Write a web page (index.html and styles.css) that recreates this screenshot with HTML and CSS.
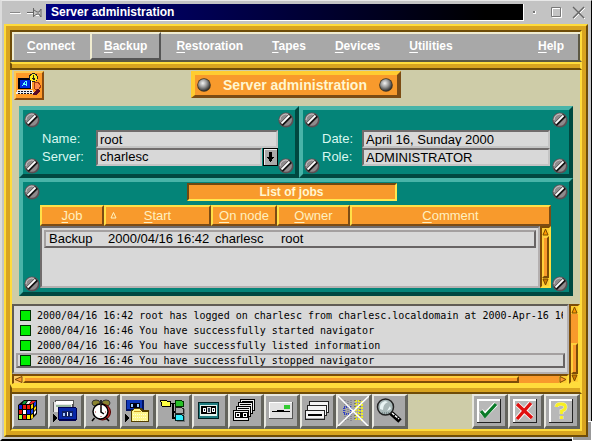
FILE: index.html
```html
<!DOCTYPE html>
<html lang="en">
<head>
<meta charset="utf-8">
<title>Server administration</title>
<link rel="stylesheet" href="styles.css">
</head>
<body>
<svg class="defs" width="0" height="0" aria-hidden="true">
  <defs>
    <radialGradient id="ball" cx="40%" cy="35%" r="65%">
      <stop offset="0" stop-color="#f4f4f4"/><stop offset=".5" stop-color="#9a9a9a"/><stop offset="1" stop-color="#333"/>
    </radialGradient>
    <pattern id="dots" width="2" height="2" patternUnits="userSpaceOnUse">
      <path fill="#ffff70" d="M0 0h2v2H0z"/><path fill="#fff" d="M0 0h1v1H0zM1 1h1v1H1z"/>
    </pattern>
    <symbol id="screw" viewBox="0 0 16 16">
      <circle cx="8" cy="8" r="7.6" fill="#5a5054"/>
      <circle cx="7.7" cy="7.5" r="6.3" fill="#8f8a8c"/>
      <path d="M2 8a6 6 0 0 1 8-5.600" stroke="#c8c4c6" fill="none"/>
      <path d="M3.500 12.500L12.500 3.500" stroke="#111" stroke-width="4"/>
      <path d="M3.500 11.500L11.500 3.500" stroke="#fff" stroke-width="1.800"/>
    </symbol>
    <symbol id="knob" viewBox="0 0 14 14"><circle cx="7" cy="7" r="6.800" fill="#43351f"/><circle cx="7" cy="7" r="6" fill="url(#ball)"/></symbol>
  </defs>
</svg>

<div class="window">
  <header class="titlebar">
    <button class="wm" aria-label="Minimize"><svg width="13" height="13"><path d="M1 7.500h11" stroke="#fff"/><path d="M1 6.500h10" stroke="#888"/></svg></button>
    <button class="wm" aria-label="Stick"><svg width="16" height="13"><path d="M1 7.500h6M9 9.500h4" stroke="#fff"/><path d="M1 6.500h6M7.500 2v9M8 4l3 2h2l2-3v8l-2-3h-2l-3 2" stroke="#666" fill="none"/></svg></button>
    <h1 class="caption">Server administration</h1>
    <div class="wm-group">
      <button class="wm" aria-label="Lower"><svg width="13" height="13"><path d="M5 5h3v3H5z" fill="#fff"/><path d="M5 5h2v2H5z" fill="#777"/></svg></button>
      <button class="wm" aria-label="Maximize"><svg width="13" height="13"><path d="M2.500 2.500h9v9h-9z" stroke="#fff" fill="none"/><path d="M1.500 1.500h9v9h-9z" stroke="#777" fill="none"/></svg></button>
      <button class="wm" aria-label="Close"><svg width="13" height="13"><path d="M2 2l11 11M13 2L2 13" stroke="#fff"/><path d="M1 1l11 11M12 1L1 12" stroke="#666" stroke-width="1.300"/></svg></button>
    </div>
  </header>

  <div class="frame">
    <nav class="menubar">
      <button class="menu"><u>C</u>onnect</button>
      <button class="menu active"><u>B</u>ackup</button>
      <button class="menu"><u>R</u>estoration</button>
      <button class="menu"><u>T</u>apes</button>
      <button class="menu"><u>D</u>evices</button>
      <button class="menu"><u>U</u>tilities</button>
      <button class="menu help"><u>H</u>elp</button>
    </nav>
    <div class="bar"></div>

    <main class="content">
      <div class="heading">
        <button class="session" aria-label="Session">
          <svg width="26" height="25" shape-rendering="crispEdges">
            <path d="M3 5h13v11H3z" fill="#fff"/><path d="M2 5h13v11H2z" fill="#001"/><path d="M4 7h10v8H4z" fill="#0028e0"/>
            <path d="M6 13l4-5 1 5M8 11h3" stroke="#6ff" fill="none"/>
            <path d="M1 17h16l1 4H0z" fill="#eee"/><path d="M2 18h14M2 20h15" stroke="#112" stroke-dasharray="2 1"/>
            <path d="M18 10l4-1 3 4-2 3h-4z" fill="#ff8a4c" stroke="#a33b12"/>
            <path d="M17 20l5-4 2 2-4 4h-3z" fill="#5a0a28"/>
            <circle cx="17.500" cy="4.500" r="4" fill="#ffee20" stroke="#222"/><path d="M17.500 2v4M16 5l2 2 1-2" stroke="#222" fill="none"/>
          </svg>
        </button>
        <h2 class="banner"><svg width="14" height="14"><use href="#knob"/></svg><span>Server administration</span><svg width="14" height="14"><use href="#knob"/></svg></h2>
      </div>

      <div class="panels">
        <section class="panel form form-user">
          <label for="name">Name:</label><input id="name" value="root">
          <label for="server">Server:</label>
          <div class="combo">
            <select id="server"><option>charlesc</option></select>
            <svg class="arrow" width="15" height="18" shape-rendering="crispEdges"><path d="M0 0h15v18H0z" fill="#000"/><path d="M1 1h13v16H1z" fill="#eee"/><path d="M2 2h12v15H2z" fill="#aaa"/><path d="M6 4h3v5h2v1h-1v1H9v2H8v1H7v-1H6v-2H5v-1H4V9h2z" fill="#000"/></svg>
          </div>
          <svg class="screw tl"><use href="#screw"/></svg><svg class="screw tr"><use href="#screw"/></svg><svg class="screw bl"><use href="#screw"/></svg><svg class="screw br"><use href="#screw"/></svg>
        </section>
        <section class="panel form form-role">
          <label for="date">Date:</label><input id="date" value="April 16, Sunday 2000">
          <label for="role">Role:</label><input id="role" value="ADMINISTRATOR">
          <svg class="screw tl"><use href="#screw"/></svg><svg class="screw tr"><use href="#screw"/></svg><svg class="screw bl"><use href="#screw"/></svg><svg class="screw br"><use href="#screw"/></svg>
        </section>
        <section class="panel jobs">
          <h3 class="list-title">List of jobs</h3>
          <div class="job-grid">
            <table>
              <thead><tr>
                <th><u>J</u>ob</th>
                <th><svg class="sort" width="7" height="7"><path d="M3.500 .5l2.500 5.500h-5z" fill="none" stroke="#fff3c0"/></svg><u>S</u>tart</th>
                <th><u>O</u>n node</th><th><u>O</u>wner</th><th><u>C</u>omment</th>
              </tr></thead>
              <tbody><tr><td>Backup</td><td>2000/04/16 16:42</td><td>charlesc</td><td>root</td><td></td></tr></tbody>
            </table>
            <div class="vscroll">
              <svg width="7" height="8"><path d="M0 0h7v8H0z" fill="#fc3"/><path d="M3.500 1L6 7H1z" fill="#f90" stroke="#7a4a00"/></svg>
              <div class="thumb"></div>
              <svg width="7" height="8"><path d="M0 0h7v8H0z" fill="#fc3"/><path d="M1 1h5L3.500 7z" fill="#c70" stroke="#7a4a00"/></svg>
            </div>
          </div>
          <svg class="screw tl"><use href="#screw"/></svg><svg class="screw tr"><use href="#screw"/></svg><svg class="screw bl"><use href="#screw"/></svg><svg class="screw br"><use href="#screw"/></svg>
        </section>
      </div>
    </main>

    <section class="log-area">
      <ul class="log">
        <li><i></i><span>2000/04/16 16:42 root has logged on charlesc from charlesc.localdomain at 2000-Apr-16 16:42</span></li>
        <li><i></i><span>2000/04/16 16:46 You have successfully started navigator</span></li>
        <li><i></i><span>2000/04/16 16:46 You have successfully listed information</span></li>
        <li class="selected"><i></i><span>2000/04/16 16:46 You have successfully stopped navigator</span></li>
      </ul>
      <div class="vscroll log-v">
        <svg width="7" height="8"><path d="M0 0h7v8H0z" fill="#fc3"/><path d="M3.500 1L6 7H1z" fill="#f90" stroke="#7a4a00"/></svg>
        <div class="thumb"></div>
        <svg width="7" height="8"><path d="M0 0h7v8H0z" fill="#fc3"/><path d="M1 1h5L3.500 7z" fill="#c70" stroke="#7a4a00"/></svg>
      </div>
      <div class="hscroll">
        <svg width="9" height="7"><path d="M0 0h9v7H0z" fill="#fc6"/><path d="M1 3.500L8 .5v6z" fill="#f93" stroke="#7a4a00"/></svg>
        <div class="thumb"></div>
        <svg width="8" height="7"><path d="M0 0h8v7H0z" fill="#fc3"/><path d="M7 3.500L1 .5v6z" fill="#f93" stroke="#7a4a00"/></svg>
      </div>
    </section>
    <div class="bar bar-low"></div>

    <footer class="toolbar">
      <button class="tool" aria-label="Overview"><svg viewBox="2 2 31 30">
        <path d="M6 11l6-5h13v14l-6 6H6z" fill="#000"/>
        <path d="M7 11h3v4H7zM15 16h3v4h-3z" fill="#0a18d8"/><path d="M11 11h3v4h-3zM15 11h3v4h-3zM11 21h3v4h-3z" fill="#e81808"/>
        <path d="M11 16h3v4h-3z" fill="#fff"/><path d="M7 21h3v4H7z" fill="#9f3"/><path d="M15 21h3v4h-3z" fill="#fe0"/><path d="M7 16h3v4H7z" fill="#e81808"/>
        <path d="M12 7h3l-2 3h-3z" fill="#0a9a38"/><path d="M16 7h3l-2 3h-3z" fill="#eee"/><path d="M20 7h4l-4 3h-3z" fill="#e22"/>
        <path d="M19 11l2-1v4l-2 1zM22 14l2-2v3l-2 2zM19 21l2-1v4l-2 1z" fill="#ffd900"/><path d="M22 9l2-2v4l-2 2zM19 16l2-1v4l-2 1z" fill="#1840e8"/><path d="M22 18l2-2v3l-2 2z" fill="#fff"/>
      </svg></button>
      <button class="tool" aria-label="Tape backup"><svg viewBox="2 2 31 30" shape-rendering="crispEdges">
        <path d="M7 6h19v12H5V8h2z" fill="#555"/><path d="M6 8h18v10H6z" fill="#e8e8e8"/><path d="M8 7h17v3H8z" fill="#fff"/><path d="M8 11h15v2H8z" fill="#99b8a0"/>
        <path d="M10 13h18v1h1v12h-1v1H11v-1h-1z" fill="#000050"/><path d="M11 14h17v11H11z" fill="#0828a8"/><path d="M14 17h11v6H14z" fill="#102060"/>
        <path d="M15 19h2v3h-2zM22 19h2v3h-2z" fill="#a8c8ff"/><path d="M19 18h1v4h-1z" fill="#fff"/>
        <path d="M5 20h1v1h1v1h1v1h1v2H8v1H7v1H6v1H5z" fill="#000"/>
      </svg></button>
      <button class="tool" aria-label="Schedule"><svg viewBox="2 2 31 30">
        <ellipse cx="12" cy="9" rx="4" ry="3" fill="#8a8430" stroke="#333"/><ellipse cx="22" cy="9" rx="4" ry="3" fill="#8a8430" stroke="#333"/>
        <circle cx="18.500" cy="18" r="8" fill="#c02828" stroke="#500"/><circle cx="16.500" cy="17.500" r="7.500" fill="#fff" stroke="#000" stroke-width="1.500"/>
        <path d="M17 11v7l3 2M10.500 24L8 27M22 24l3 3M17 6v3" stroke="#000" stroke-width="1.500" fill="none"/><path d="M17 12v1M17 22v1M11 18h1M21 18h1" stroke="#a33"/>
      </svg></button>
      <button class="tool" aria-label="File backup"><svg viewBox="2 2 31 30" shape-rendering="crispEdges">
        <path d="M6 6h18v11H6z" fill="#001060"/><path d="M7 6h15v9H7z" fill="#1038b8"/><path d="M10 9h10v5H10z" fill="#001"/><path d="M11 10h2v3h-2zM17 10h2v3h-2z" fill="#9cf"/>
        <path d="M12 16l2-2h7l2 2h6v12H11V16z" fill="#554000"/><path d="M12 17l2-2h6l2 3h6v9H12V17z" fill="#fff68a"/><path d="M14 17h7v1h-7z" fill="#cc9b20"/><path d="M13 20h14M13 23h14M13 26h14" stroke="#fffdd8" stroke-dasharray="1 1"/>
        <path d="M5 20h1v1h1v1h1v1h1v2H8v1H7v1H6v1H5z" fill="#000"/>
      </svg></button>
      <button class="tool" aria-label="Tree"><svg viewBox="2 2 31 30" shape-rendering="crispEdges">
        <path d="M13 9h6v1h-6zM16 9h2v16h-2zM16 17h4v2h-4zM16 23h4v2h-4z" fill="#000"/>
        <path d="M4 6h6l1 1h4v6H6V12H5V8H4z" fill="#000"/><path d="M5 7h5l1 1h3v4H6V8H5z" fill="#ff4"/>
        <path d="M19 6h6l1 1h2v6h-9z" fill="#030"/><path d="M20 7h5l1 1h1v4h-7z" fill="#28c028"/>
        <path d="M19 13h6l1 1h2v6h-9z" fill="#222"/><path d="M20 14h5l1 1h1v4h-7z" fill="#aaa"/><path d="M28 15h1v6h-8v-1h7zM28 22h1v6h-8v-1h7z" fill="#777"/>
        <path d="M19 20h6l1 1h2v6h-9z" fill="#022"/><path d="M20 21h5l1 1h1v4h-7z" fill="#3ef"/>
      </svg></button>
      <button class="tool" aria-label="Cassette"><svg viewBox="2 2 31 30" shape-rendering="crispEdges">
        <path d="M6 8h21v17H6z" fill="#022"/><path d="M7 9h19v15H7z" fill="#207c80"/><path d="M8 11h17v11H8z" fill="#e4f4ee"/><path d="M9 12h15v8H9z" fill="#000"/>
        <path d="M11 14h3v4h-3zM20 14h3v4h-3z" fill="#fff"/><path d="M12 15h1v2h-1zM21 15h1v2h-1z" fill="#123"/><path d="M15 13h4v6h-4z" fill="#ddd"/><path d="M16 14h2v4h-2z" fill="#345"/>
      </svg></button>
      <button class="tool" aria-label="Cassette stack"><svg viewBox="2 2 31 30" shape-rendering="crispEdges">
        <g stroke="#000" fill="#eee"><path d="M12.500 5.500h14v11h-14z"/><path d="M10.500 8.500h14v11h-14z"/><path d="M8.500 12.500h14v10h-14z"/><path d="M5.500 16.500h15v10h-15z"/></g>
        <path d="M14 7h11M12 10h11M10 14h11" stroke="#000"/><path d="M7 18h13v6H7z" fill="#000"/><path d="M8 19h4v4H8zM15 19h4v4h-4z" fill="#fff"/><path d="M9 20h2v2H9zM16 20h2v2h-2z" fill="#000"/>
      </svg></button>
      <button class="tool" aria-label="Drive"><svg viewBox="2 2 31 30" shape-rendering="crispEdges">
        <path d="M5 8h24v17H5z" fill="#555"/><path d="M5 8h23v16H5z" fill="#fff"/><path d="M6 9h22v15H6z" fill="#e2e2e2"/><path d="M20 11h6v4h-6z" fill="#3c3"/><path d="M8 17h18v1H8zM13 16h7v2h-7z" fill="#000"/>
      </svg></button>
      <button class="tool" aria-label="Drive stack"><svg viewBox="2 2 31 30" shape-rendering="crispEdges">
        <g stroke="#222" fill="#f4f4f4"><path d="M9.500 7.500h19v11h-19z"/><path d="M7.500 11.500h19v10h-19z"/><path d="M5.500 16.500h19v9h-19z"/></g>
        <path d="M8 20h14v2H8z" fill="#000"/><path d="M6 24h18v1H6z" fill="#aaa"/>
      </svg></button>
      <button class="tool" aria-label="Disabled view"><svg viewBox="2 2 31 30">
        <path d="M9 6v21M12 7v20M15 6v21" stroke="#667" stroke-dasharray="1 1"/><path d="M8 13h7v7H8z" fill="none" stroke="#3040c8" stroke-dasharray="1 1" stroke-width="2"/>
        <path d="M20 6v21M23 6v21M26 7v20" stroke="#ee2" stroke-width="2" stroke-dasharray="2 1"/><path d="M19 6v21M24 6v21" stroke="#443" stroke-dasharray="1 2"/>
        <path d="M2 2l31 31M33 2L2 32" stroke="#fff" stroke-width="1.500"/>
      </svg></button>
      <button class="tool" aria-label="Search"><svg viewBox="2 2 31 30">
        <path d="M18 18l10 9" stroke="#000" stroke-width="5"/><path d="M20 19l7 6" stroke="#fff" stroke-width="1.500" stroke-dasharray="3 1"/>
        <circle cx="13.500" cy="13" r="8" fill="#a9b8b8" stroke="#222" stroke-width="1.500"/><path d="M8 15q-1-6 5-8l3 1q-5 2-5 8zM15 17l3-5 1 3z" fill="#e8f4f4"/><path d="M10 19h7" stroke="#566" stroke-dasharray="1 1"/>
      </svg></button>
      <span class="spacer"></span>
      <button class="tool" aria-label="OK"><svg viewBox="2 2 31 30">
        <path d="M5 5h24v24H5z" fill="#222"/><path d="M5 5h23v23H5z" fill="#fff"/><path d="M7 7h21v21H7z" fill="#b8b8b8"/>
        <path d="M9 17l4 4L24 10" stroke="#fff" stroke-width="5" fill="none"/><path d="M9 17l4 5L24 10" stroke="#0a7a28" stroke-width="3.200" fill="none"/>
      </svg></button>
      <button class="tool" aria-label="Cancel"><svg viewBox="2 2 31 30">
        <path d="M5 5h24v24H5z" fill="#222"/><path d="M5 5h23v23H5z" fill="#fff"/><path d="M7 7h21v21H7z" fill="#b8b8b8"/>
        <path d="M9 10l15 14M23 9L9 25" stroke="#fff" stroke-width="5"/><path d="M9 10l15 14M23 9L9 25" stroke="#e01010" stroke-width="3.400"/>
      </svg></button>
      <button class="tool" aria-label="Help"><svg viewBox="2 2 31 30">
        <path d="M5 5h24v24H5z" fill="#222"/><path d="M5 5h23v23H5z" fill="#fff"/><path d="M7 7h21v21H7z" fill="#b8b8b8"/>
        <path d="M12.500 13q0-3 4.500-3t4.500 3-4 4v3M17.500 22v3" stroke="#e8e8d0" stroke-width="4" fill="none"/><path d="M12.500 13q0-3 4.500-3t4.500 3-4 4v3M17.500 22v3" stroke="#f8f020" stroke-width="2.800" fill="none"/>
      </svg></button>
    </footer>
  </div>
  <div class="grip"></div>
</div>
</body>
</html>
```
FILE: styles.css
```css
* { box-sizing: border-box; }

body {
  margin: 0;
  font: 13px/16px "Liberation Sans", Arial, sans-serif;
  color: #000;
  background: #000;
}

button { font: inherit; margin: 0; padding: 0; border: 0; background: none; }
svg { display: block; }
h1, h2, h3, ul { margin: 0; padding: 0; }
u { text-underline-offset: 2px; text-decoration-thickness: 1px; }
.defs { position: absolute; }

.window {
  position: relative;
  display: flex;
  flex-direction: column;
  min-height: 100vh;
  padding: 0 3px 2px 2px;
  border: solid;
  border-width: 1px 1px 2px 2px;
  border-color: #e8e8e8 #000 #000 #dcdcdc;
  background: #c3c3c3;
}

.titlebar {
  display: flex;
  align-items: center;
  gap: 4px;
  height: 23px;
  padding-left: 5px;
}
.caption {
  flex: 1;
  height: 17px;
  padding-left: 5px;
  border-right: 1px solid #fff;
  border-bottom: 1px solid #fff;
  font-size: 12px;
  line-height: 17px;
  color: #fff;
  background: linear-gradient(90deg, #000080, #000 92%);
}
.wm-group { display: flex; gap: 9px; padding: 0 3px 0 0; }

.frame {
  flex: 1;
  display: flex;
  flex-direction: column;
  padding: 4px;
  border: 2px solid;
  border-color: #ffdc3c #6e4c08 #6e4c08 #ffdc3c;
  background: #d8a420;
}

.menubar {
  display: flex;
  gap: 1px;
  height: 32px;
  padding: 0 2px 0 1px;
  border: 2px solid;
  border-color: #6e4c08 #ffdc3c #5c5844 #6e4c08;
  background: #a8a8a8;
  box-shadow: inset 2px 2px #f0ecd0, inset -2px 0 #5c5844;
}
.menu {
  padding: 0 12px;
  border: 2px solid transparent;
  font-size: 12px;
  font-weight: 700;
  color: #fff;
}
.menu.active { border-color: #f0ecd0 #555 #555 #f0ecd0; }
.help { margin-left: auto; }

.bar {
  height: 8px;
  border: 2px solid;
  border-color: #ffdc3c #ffdc3c #6e4c08 #6e4c08;
  background: #d8a420;
}
.bar-low { height: 10px; border-top-width: 4px; }

.content {
  flex: 1;
  display: flex;
  flex-direction: column;
  padding: 1px 7px 8px;
  border: 2px solid;
  border-width: 0 2px;
  border-color: #6e4c08 #ffdc3c;
  background: #cecca8;
}
.heading {
  display: grid;
  grid-template-columns: 1fr auto 1fr;
  align-items: start;
  height: 35px;
  margin-left: -5px;
  margin-right: -5px;
}
.session {
  width: 30px;
  padding: 0;
  border: 2px solid;
  border-color: #ffc850 #8a4c10 #8a4c10 #ffc850;
  background: #ff9a28;
}
.banner {
  display: flex;
  align-items: center;
  gap: 12px;
  height: 27px;
  padding: 0 4px 0 2px;
  border: 4px solid;
  border-width: 4px 4px 3px;
  border-color: #ffcc30 #7c4c14 #7c4c14 #ffcc30;
  background: #f89a2c;
  font-size: 14px;
  color: #fff6d0;
}

.panels {
  flex: 1;
  display: grid;
  grid-template-columns: 280fr 274fr;
  grid-template-rows: auto 1fr;
}
.panel {
  position: relative;
  border: 4px solid;
  border-color: #48b4a8 #004840 #004840 #48b4a8;
  background: #048478;
}
.form {
  display: grid;
  grid-auto-rows: 18px;
  align-items: center;
  color: #d8f8f0;
}
.form-user { grid-template-columns: 54px 1fr; padding: 20px 17px 8px 19px; }
.form-role { grid-template-columns: 40px 1fr; padding: 20px 19px 8px 19px; }
input, select {
  width: 100%;
  min-width: 0;
  height: 18px;
  margin: 0;
  padding: 0 2px;
  border: 2px solid;
  border-color: #706c6c #c4c4c4 #c4c4c4 #706c6c;
  border-radius: 0;
  font: 13px/14px "Liberation Sans", Arial, sans-serif;
  color: #000;
  background: #d8d8d8;
  appearance: none;
}
.combo { display: flex; gap: 1px; }
.combo select { flex: 1; }
.arrow { flex: none; }

.screw { position: absolute; width: 16px; height: 16px; }
.tl { left: 1px; top: 2px; }
.tr { right: 1px; top: 2px; }
.bl { left: 1px; bottom: 0; }
.br { right: 1px; bottom: 0; }

.jobs {
  grid-column: 1 / 3;
  display: flex;
  flex-direction: column;
  padding: 1px 18px 4px 17px;
}
.list-title {
  align-self: center;
  width: 210px;
  height: 18px;
  margin-right: 8px;
  margin-bottom: 4px;
  border: 2px solid;
  border-color: #704810 #ffe850 #ffe850 #704810;
  font-size: 12px;
  line-height: 14px;
  text-align: center;
  color: #fff6d0;
  background: #f89a2c;
}
.job-grid {
  flex: 1;
  display: grid;
  grid-template-columns: 1fr 11px;
  grid-template-rows: 21px 1fr;
}
table { display: contents; }
thead { display: block; grid-area: 1 / 1 / 2 / 3; }
thead tr { display: grid; grid-template-columns: 64px 107px 66px 73px 1fr; }
th {
  position: relative;
  height: 21px;
  padding: 0;
  border: 2px solid;
  border-color: #ffe048 #7c4c14 #7c4c14 #ffe048;
  font-weight: 400;
  line-height: 17px;
  color: #fff0c0;
  background: #f89a2c;
}
.sort { position: absolute; left: 4px; top: 5px; }
tbody {
  display: block;
  grid-area: 2 / 1;
  padding: 2px;
  border: 2px solid;
  border-color: #706c6c #b4b0b0 #b4b0b0 #706c6c;
  background: #d8d8d8;
}
tbody tr {
  display: grid;
  grid-template-columns: 59px 107px 66px 73px 1fr;
  height: 18px;
  border: 2px solid;
  border-color: #a4a0a0 #686464 #686464 #a4a0a0;
}
td { padding: 0 3px; line-height: 14px; white-space: nowrap; }

.vscroll {
  display: flex;
  flex-direction: column;
  border: 2px solid;
  border-color: #7c4c08 #ffdc3c #ffdc3c #7c4c08;
  background: #f89a2c;
}
.vscroll .thumb, .hscroll .thumb {
  flex: 1;
  border: 2px solid;
  border-color: #ffd03c #7c4c08 #7c4c08 #ffd03c;
  background: #f89a2c;
}

.log-area {
  display: grid;
  grid-template-columns: minmax(0, 1fr) 11px;
  grid-template-rows: auto 10px;
  border: solid;
  border-width: 0 2px;
  border-color: #6e4c08 #ffdc3c;
  background: #d8d8d8;
}
.log {
  padding: 2px 2px 4px;
  border: 2px solid;
  border-color: #605c54 #b4b0b0 #b4b0b0 #605c54;
  list-style: none;
  font: 10px/11px "DejaVu Sans Mono", monospace;
}
.log li {
  display: flex;
  gap: 6px;
  height: 15px;
  padding: 0 0 0 2px;
  border: 2px solid transparent;
  white-space: nowrap;
}
.log span { flex: 1; overflow: hidden; }
.log li.selected { border-color: #a4a0a0 #686464 #686464 #a4a0a0; }
.log i { flex: none; width: 11px; height: 11px; border: 1px solid #003000; background: #00f000; }
.log-v { grid-area: 1 / 2 / 3 / 3; }
.log-v .thumb { flex: none; height: 31px; margin-top: auto; }
.hscroll {
  display: flex;
  border: solid;
  border-width: 2px 2px 1px;
  border-color: #7c4c08 #ffdc3c #ffdc3c #7c4c08;
  background: #f89a2c;
}
.hscroll .thumb { margin-right: 40px; }

.toolbar {
  display: flex;
  border: solid;
  border-width: 0 2px 2px;
  border-color: #6e4c08 #ffdc3c #ffdc3c #6e4c08;
  background: #cecca8;
}
.tool {
  width: 36px;
  height: 35px;
  border: solid;
  border-width: 2px 3px 3px 2px;
  border-color: #e8e8e0 #64645c #64645c #e8e8e0;
  background: #a8a8a8;
}
.tool svg { width: 31px; height: 30px; }
.spacer { flex: 1; }

.grip {
  position: absolute;
  right: -1px;
  bottom: -2px;
  width: 20px;
  height: 20px;
  border: 1px solid #fff;
  clip-path: polygon(80% 0, 100% 0, 100% 100%, 0 100%, 0 80%, 80% 80%);
  background: #999;
}
```
